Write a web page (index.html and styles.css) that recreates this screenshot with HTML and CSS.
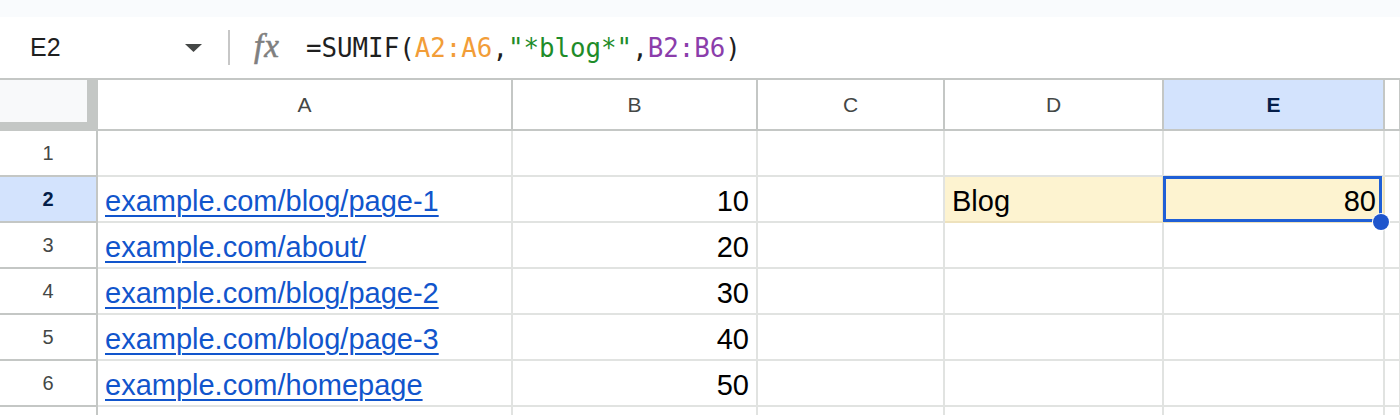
FILE: index.html
```html
<!DOCTYPE html>
<html>
<head>
<meta charset="utf-8">
<link rel="stylesheet" href="styles.css">
</head>
<body>
<div class="topstrip"></div>
<div class="fbar">
  <div class="namebox">
    <span class="cellref">E2</span>
    <svg class="caret" width="17" height="8" viewBox="0 0 17 8"><path d="M0 0H17L8.5 8Z" fill="#444746"/></svg>
  </div>
  <div class="sep"></div>
  <span class="fx">fx</span>
  <div class="formula">=SUMIF(<span class="r1">A2:A6</span>,<span class="str">"*blog*"</span>,<span class="r2">B2:B6</span>)</div>
</div>
<div class="sheet">
  <div class="corner"><div class="corner-inner"></div></div>
  <div class="ch">A</div>
  <div class="ch">B</div>
  <div class="ch">C</div>
  <div class="ch">D</div>
  <div class="ch ch-sel">E</div>
  <div class="ch"></div>

  <div class="rh">1</div>
  <div class="c"></div>
  <div class="c"></div>
  <div class="c"></div>
  <div class="c"></div>
  <div class="c"></div>
  <div class="c"></div>

  <div class="rh rh-sel">2</div>
  <div class="c"><a class="link" href="#">example.com/blog/page-1</a></div>
  <div class="c num">10</div>
  <div class="c"></div>
  <div class="c hl">Blog</div>
  <div class="c num hl active">80<div class="sel-box"></div><div class="sel-dot"></div></div>
  <div class="c"></div>

  <div class="rh">3</div>
  <div class="c"><a class="link" href="#">example.com/about/</a></div>
  <div class="c num">20</div>
  <div class="c"></div>
  <div class="c"></div>
  <div class="c"></div>
  <div class="c"></div>

  <div class="rh">4</div>
  <div class="c"><a class="link" href="#">example.com/blog/page-2</a></div>
  <div class="c num">30</div>
  <div class="c"></div>
  <div class="c"></div>
  <div class="c"></div>
  <div class="c"></div>

  <div class="rh">5</div>
  <div class="c"><a class="link" href="#">example.com/blog/page-3</a></div>
  <div class="c num">40</div>
  <div class="c"></div>
  <div class="c"></div>
  <div class="c"></div>
  <div class="c"></div>

  <div class="rh">6</div>
  <div class="c"><a class="link" href="#">example.com/homepage</a></div>
  <div class="c num">50</div>
  <div class="c"></div>
  <div class="c"></div>
  <div class="c"></div>
  <div class="c"></div>

  <div class="rh last"></div>
  <div class="c last"></div>
  <div class="c last"></div>
  <div class="c last"></div>
  <div class="c last"></div>
  <div class="c last"></div>
  <div class="c last"></div>
</div>
</body>
</html>
```

FILE: styles.css
```css
html, body {
  margin: 0;
  padding: 0;
}
body {
  width: 1400px;
  height: 415px;
  overflow: hidden;
  background: #ffffff;
  font-family: "Liberation Sans", Arial, sans-serif;
  color: #000;
}
.topstrip {
  height: 17px;
  background: #f9fbfd;
}
.fbar {
  height: 61px;
  display: flex;
  align-items: center;
  border-bottom: 2px solid #c4c7c5;
  background: #fff;
}
.namebox {
  width: 202px;
  box-sizing: border-box;
  padding-left: 30px;
  display: flex;
  align-items: center;
  justify-content: space-between;
}
.cellref {
  font-size: 25px;
  color: #1f1f1f;
}
.caret {
  display: block;
  margin-top: 1px;
}
.sep {
  width: 2px;
  height: 35px;
  margin-left: 26px;
  background: #c7c7c7;
}
.fx {
  margin-left: 24px;
  width: 30px;
  font-family: "Liberation Serif", "Times New Roman", serif;
  font-style: italic;
  font-size: 33px;
  color: #7f7f7f;
  letter-spacing: 1px;
  line-height: 1;
  margin-top: -2px;
  -webkit-text-stroke: 0.6px #7f7f7f;
}
.formula {
  margin-left: 22px;
  font-family: "DejaVu Sans Mono", monospace;
  font-size: 25.8px;
  color: #1f1f1f;
  white-space: pre;
}
.r1 { color: #f29d38; }
.str { color: #1e8c29; }
.r2 { color: #8b3dab; }

.sheet {
  display: grid;
  grid-template-columns: 98px 415px 245px 187px 219px 221px 1fr;
  grid-template-rows: 51px repeat(6, 46px) 8px;
  overflow: hidden;
}
.sheet > div {
  box-sizing: border-box;
  border-right: 2px solid #e1e3e1;
  border-bottom: 2px solid #e1e3e1;
  min-width: 0;
}
.sheet > .last {
  border-bottom: none;
}
.sheet > .corner {
  border: none;
  background: #c4c7c5;
}
.corner-inner {
  width: 87px;
  height: 42px;
  background: #f8f9fa;
}
.sheet > .ch {
  border-color: #c4c7c5;
  display: flex;
  align-items: center;
  justify-content: center;
  font-size: 21px;
  color: #444746;
  padding-top: 1px;
}
.sheet > .ch-sel {
  background: #d3e3fd;
  color: #041e49;
  font-weight: bold;
}
.sheet > .rh {
  border-color: #c4c7c5;
  display: flex;
  align-items: center;
  justify-content: center;
  font-size: 20px;
  color: #444746;
}
.sheet > .rh-sel {
  background: #d3e3fd;
  color: #041e49;
  font-weight: bold;
}
.c {
  display: flex;
  align-items: flex-end;
  padding: 0 7px 5px 7px;
  font-size: 29px;
  line-height: 30px;
  white-space: nowrap;
}
.num {
  justify-content: flex-end;
}
.sheet > .hl {
  background: #fdf3d0;
  border-color: #eee2bd;
}
.link {
  color: #1155cc;
  text-decoration: underline;
  text-decoration-thickness: 2px;
  text-underline-offset: 4px;
}
.active {
  position: relative;
  overflow: visible;
}
.sel-box {
  position: absolute;
  top: -1px;
  left: -1px;
  right: 1px;
  bottom: -1px;
  border: 3px solid #1f5fd6;
  pointer-events: none;
}
.sel-dot {
  position: absolute;
  width: 16px;
  height: 16px;
  right: -6px;
  bottom: -9px;
  border-radius: 50%;
  background: #1f55cc;
  box-shadow: 0 0 0 1px #fff;
  z-index: 5;
}
```
